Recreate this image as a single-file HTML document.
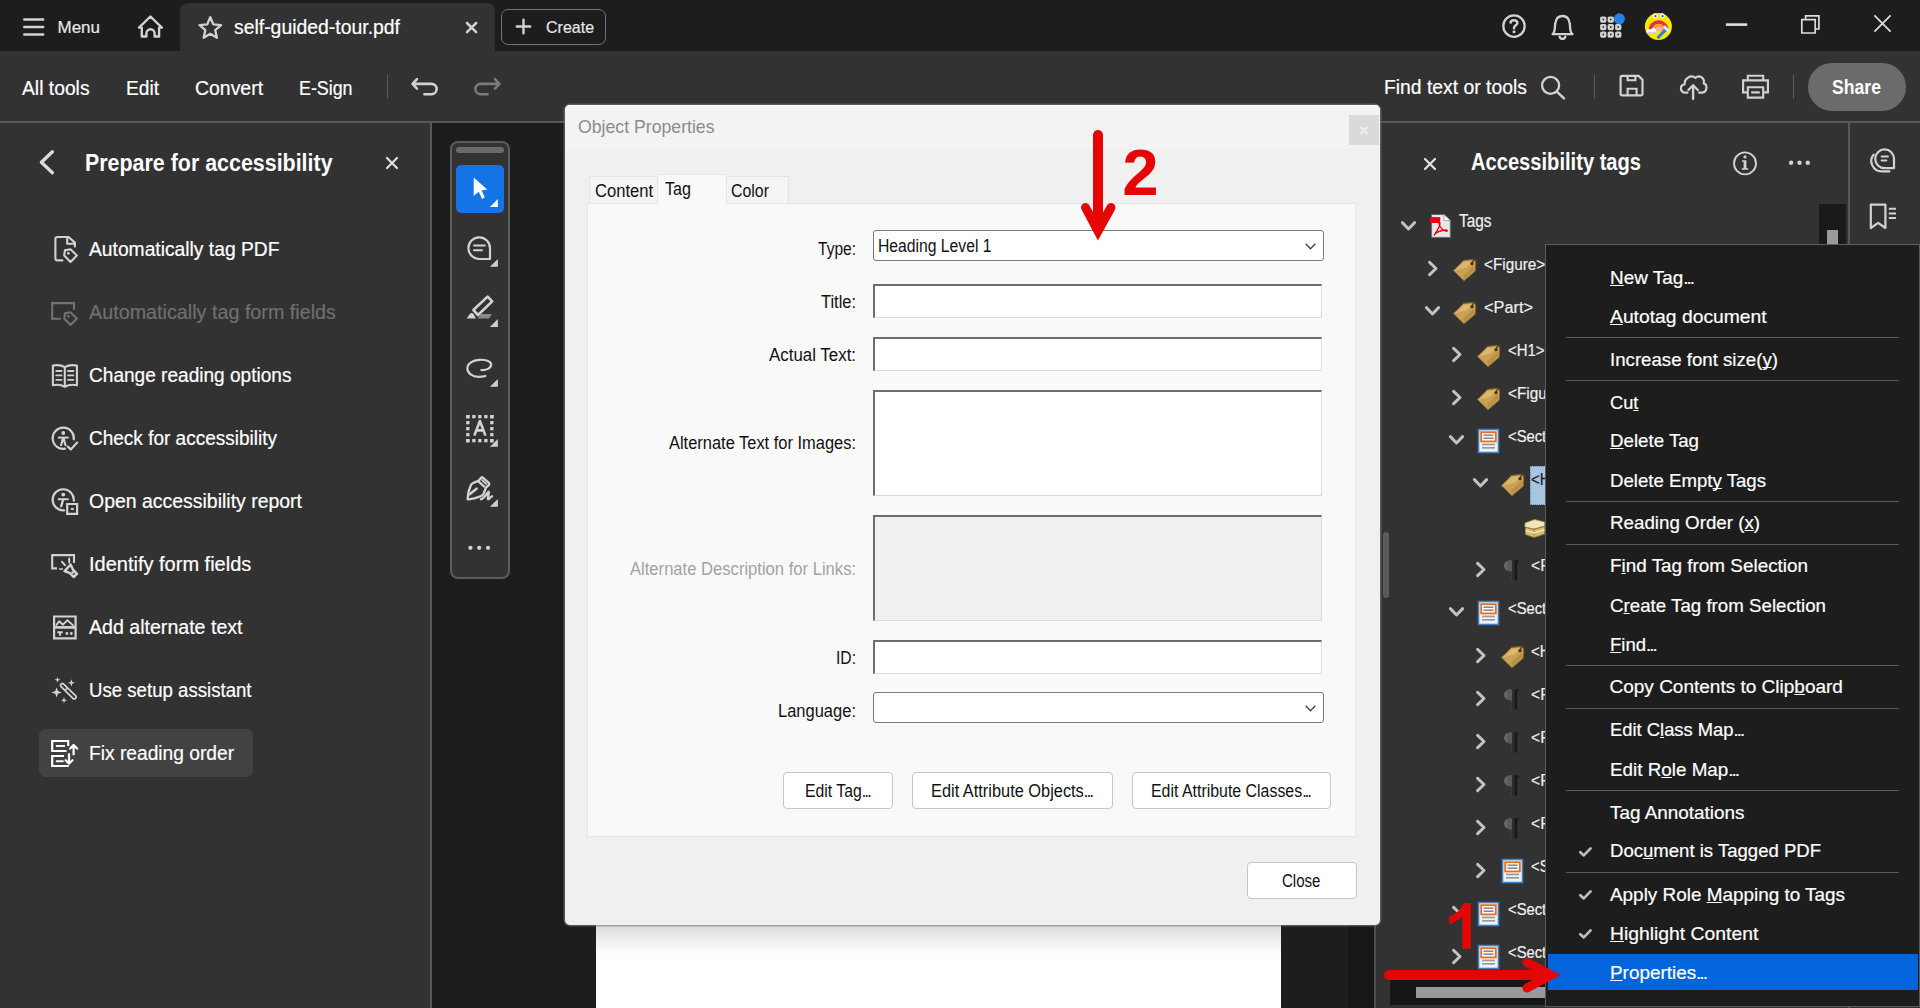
<!DOCTYPE html>
<html><head><meta charset="utf-8"><title>Acrobat</title><style>
html,body{margin:0;padding:0;}
body{width:1920px;height:1008px;overflow:hidden;background:#1d1d1d;font-family:"Liberation Sans",sans-serif;position:relative;}
.b{position:absolute;box-sizing:border-box;}
.t{position:absolute;white-space:nowrap;line-height:1;transform-origin:0 50%;-webkit-text-stroke:0.2px currentColor;}
svg{overflow:visible;}
u{text-decoration:underline;text-decoration-thickness:1.4px;text-underline-offset:1px;text-decoration-skip-ink:none;}
</style></head><body>
<div class="b" style="left:180px;top:3px;width:315px;height:49px;background:#323232;border-radius:8px 8px 0 0;"></div>
<div class="b" style="left:0px;top:51px;width:1920px;height:72px;background:#323232;border-bottom:2px solid #585858;"></div>
<div class="b" style="left:0px;top:123px;width:432px;height:885px;background:#323232;border-right:2px solid #585858;"></div>
<div class="b" style="left:596px;top:900px;width:685px;height:108px;background:#fff;"></div>
<div class="b" style="left:1348px;top:123px;width:26px;height:885px;background:#171717;"></div>
<div class="b" style="left:1374px;top:123px;width:476px;height:885px;background:#323232;border-left:2px solid #4f4f4f;"></div>
<div class="b" style="left:1848px;top:123px;width:72px;height:885px;background:#323232;border-left:2px solid #585858;"></div>
<div class="b" style="left:450px;top:141px;width:60px;height:438px;background:#323232;border:2px solid #5c5c5c;border-radius:8px;"></div>
<div class="b" style="left:456px;top:147px;width:48px;height:6px;background:#6a6a6a;border-radius:3px;"></div>
<div class="b" style="left:456px;top:165px;width:48px;height:48px;background:#1473e6;border-radius:5px;"></div>
<div class="t" style="left:57.50px;top:18px;font-size:17px;line-height:19px;color:#e6e6e6;">Menu</div>
<div class="t" style="left:234.00px;top:16px;font-size:20px;line-height:22px;color:#ffffff;transform:scaleX(0.9693);">self-guided-tour.pdf</div>
<div class="b" style="left:501px;top:9px;width:105px;height:36px;border:1.5px solid #727272;border-radius:7px;"></div>
<div class="t" style="left:546.00px;top:18px;font-size:17px;line-height:19px;color:#e6e6e6;transform:scaleX(0.9412);">Create</div>
<div class="t" style="left:22.00px;top:77px;font-size:20px;line-height:22px;color:#ffffff;transform:scaleX(0.9643);">All tools</div>
<div class="t" style="left:126.00px;top:77px;font-size:20px;line-height:22px;color:#ffffff;transform:scaleX(0.9565);">Edit</div>
<div class="t" style="left:195.00px;top:77px;font-size:20px;line-height:22px;color:#ffffff;transform:scaleX(0.9714);">Convert</div>
<div class="t" style="left:299.00px;top:77px;font-size:20px;line-height:22px;color:#ffffff;transform:scaleX(0.8917);">E-Sign</div>
<div class="b" style="left:387px;top:75px;width:1px;height:24px;background:#5a5a5a;"></div>
<div class="t" style="left:1384.00px;top:76px;font-size:20px;line-height:22px;color:#ffffff;transform:scaleX(0.9670);">Find text or tools</div>
<div class="b" style="left:1594px;top:75px;width:1px;height:24px;background:#5a5a5a;"></div>
<div class="b" style="left:1793px;top:75px;width:1px;height:24px;background:#5a5a5a;"></div>
<div class="b" style="left:1808px;top:63px;width:98px;height:48px;background:#6b6b6b;border-radius:24px;"></div>
<div class="t" style="left:1832.00px;top:76px;font-size:20px;line-height:22px;color:#ffffff;font-weight:bold;-webkit-text-stroke:0;transform:scaleX(0.8809);">Share</div>
<div class="t" style="left:84.50px;top:150px;font-size:23px;line-height:26px;color:#ffffff;font-weight:bold;-webkit-text-stroke:0;transform:scaleX(0.9309);">Prepare for accessibility</div>
<div class="b" style="left:39px;top:729px;width:214px;height:48px;background:#424242;border-radius:7px;"></div>
<div class="t" style="left:89.00px;top:238px;font-size:20px;line-height:22px;color:#ffffff;transform:scaleX(0.9627);">Automatically tag PDF</div>
<div class="t" style="left:89.00px;top:301px;font-size:20px;line-height:22px;color:#6f6f6f;transform:scaleX(0.9875);">Automatically tag form fields</div>
<div class="t" style="left:89.00px;top:364px;font-size:20px;line-height:22px;color:#ffffff;transform:scaleX(0.9535);">Change reading options</div>
<div class="t" style="left:89.00px;top:427px;font-size:20px;line-height:22px;color:#ffffff;transform:scaleX(0.9501);">Check for accessibility</div>
<div class="t" style="left:89.00px;top:490px;font-size:20px;line-height:22px;color:#ffffff;transform:scaleX(0.9726);">Open accessibility report</div>
<div class="t" style="left:89.00px;top:553px;font-size:20px;line-height:22px;color:#ffffff;">Identify form fields</div>
<div class="t" style="left:89.00px;top:616px;font-size:20px;line-height:22px;color:#ffffff;transform:scaleX(0.9793);">Add alternate text</div>
<div class="t" style="left:89.00px;top:679px;font-size:20px;line-height:22px;color:#ffffff;transform:scaleX(0.9312);">Use setup assistant</div>
<div class="t" style="left:89.00px;top:742px;font-size:20px;line-height:22px;color:#ffffff;transform:scaleX(0.9595);">Fix reading order</div>
<svg class="b" style="left:0px;top:0px;" width="1920" height="1008" viewBox="0 0 1920 1008"><path d="M24.3 19.6H43.2M24.3 27.1H43.2M24.3 34.4H43.2" stroke="#d2d2d2" stroke-width="2.5" fill="none" stroke-linecap="round" stroke-linejoin="round" /><path d="M141.8 36.5V27.6H139L150.4 16.5L161.9 27.6H159.1V36.5H154.6V33.4A4.1 4.1 0 0 0 146.4 33.4V36.5Z" stroke="#d2d2d2" stroke-width="2.4" fill="none" stroke-linecap="round" stroke-linejoin="round" /><path d="M210.30 17.30L213.36 24.39L221.05 25.11L215.25 30.21L216.94 37.74L210.30 33.80L203.66 37.74L205.35 30.21L199.55 25.11L207.24 24.39Z" stroke="#d2d2d2" stroke-width="2.3" fill="none" stroke-linecap="round" stroke-linejoin="round" /><path d="M467 23L476.2 32.2M476.2 23L467 32.2" stroke="#d2d2d2" stroke-width="2.5" fill="none" stroke-linecap="round" stroke-linejoin="round" /><path d="M516.8 26.5H530.2M523.5 19.8V33.2" stroke="#d2d2d2" stroke-width="2.4" fill="none" stroke-linecap="round" stroke-linejoin="round" /><circle cx="1514" cy="26.1" r="10.7" stroke="#d2d2d2" stroke-width="2.3" fill="none"/><path d="M1510.6 22.6C1510.8 19.4 1517.6 19.4 1517.4 23C1517.2 25.4 1514 25.4 1514 28.2" stroke="#d2d2d2" stroke-width="2.5" fill="none" stroke-linecap="round" stroke-linejoin="round" /><circle cx="1514" cy="31.8" r="1.55" fill="#d2d2d2"/><path d="M1552.6 34.2C1555.6 31.5 1554.6 27 1555.3 23.3C1556 18.6 1558.8 16 1562.5 16C1566.2 16 1569 18.6 1569.7 23.3C1570.4 27 1569.4 31.5 1572.4 34.2Z" stroke="#d2d2d2" stroke-width="2.3" fill="none" stroke-linecap="round" stroke-linejoin="round" /><path d="M1559.6 36.6A3 3 0 0 0 1565.4 36.6" stroke="#d2d2d2" stroke-width="2.3" fill="none" stroke-linecap="round" stroke-linejoin="round" /><rect x="1601.3" y="17.6" width="3.9" height="3.9" rx="0.5" stroke="#d2d2d2" stroke-width="2.4" fill="none"/><rect x="1608.8" y="17.6" width="3.9" height="3.9" rx="0.5" stroke="#d2d2d2" stroke-width="2.4" fill="none"/><rect x="1601.3" y="25.1" width="3.9" height="3.9" rx="0.5" stroke="#d2d2d2" stroke-width="2.4" fill="none"/><rect x="1608.8" y="25.1" width="3.9" height="3.9" rx="0.5" stroke="#d2d2d2" stroke-width="2.4" fill="none"/><rect x="1616.3" y="25.1" width="3.9" height="3.9" rx="0.5" stroke="#d2d2d2" stroke-width="2.4" fill="none"/><rect x="1601.3" y="32.6" width="3.9" height="3.9" rx="0.5" stroke="#d2d2d2" stroke-width="2.4" fill="none"/><rect x="1608.8" y="32.6" width="3.9" height="3.9" rx="0.5" stroke="#d2d2d2" stroke-width="2.4" fill="none"/><rect x="1616.3" y="32.6" width="3.9" height="3.9" rx="0.5" stroke="#d2d2d2" stroke-width="2.4" fill="none"/><circle cx="1619.4" cy="18.8" r="5.5" fill="#2680eb"/><g><circle cx="1658.4" cy="26.5" r="13.5" fill="#ffe500"/>
<path d="M1650.2 31.6C1650.2 18.8 1667 18.8 1667 31.6" stroke="#ea2a52" stroke-width="3.6" fill="none"/>
<path d="M1653.8 31.6C1653.8 23.6 1663.6 23.6 1663.6 31.6" stroke="#ff9a3e" stroke-width="2.8" fill="none"/>
<path d="M1656.4 31.6C1656.4 27.4 1661 27.4 1661 31.6" stroke="#f7a8da" stroke-width="2.2" fill="none"/>
<path d="M1646.4 32.6C1645.6 29.2 1649.6 28.2 1650.6 29.8C1652 26.8 1657 27.8 1656.4 32.6Z" fill="#fff"/>
<path d="M1646.6 32.4H1656.4" stroke="#c9d2e6" stroke-width="1.2"/>
<path d="M1658.4 37.2L1666.4 29" stroke="#2d7ff0" stroke-width="3.2" stroke-linecap="round"/>
<path d="M1664.8 27.2L1668.2 30.6" stroke="#d6ebff" stroke-width="3" stroke-linecap="round"/>
<circle cx="1655" cy="15.8" r="2.5" fill="#fff"/><circle cx="1662.2" cy="15.8" r="2.5" fill="#fff"/>
<circle cx="1655.4" cy="16.2" r="1.1" fill="#2b4fd0"/><circle cx="1662.6" cy="16.2" r="1.1" fill="#2b4fd0"/></g><path d="M1725.8 24.6H1747.2" stroke="#e0e0e0" stroke-width="2.6" fill="none" stroke-linecap="butt" stroke-linejoin="miter" /><path d="M1801.8 19.7H1815.2V33H1801.8Z M1805.6 19.7V15.9H1818.9V29H1815.2" stroke="#dcdcdc" stroke-width="1.7" fill="none" stroke-linecap="butt" stroke-linejoin="miter" /><path d="M1874.4 15.4L1890.6 31.6M1890.6 15.4L1874.4 31.6" stroke="#e0e0e0" stroke-width="1.7" fill="none" stroke-linecap="butt" stroke-linejoin="miter" /><path d="M417 79.2L412.5 83.9L417 88.6M412.8 83.9H431.5A5.1 5.1 0 0 1 431.5 94.2H424.4" stroke="#d2d2d2" stroke-width="2.6" fill="none" stroke-linecap="round" stroke-linejoin="round" /><path d="M495 79.2L499.5 83.9L495 88.6M499.2 83.9H480.5A5.1 5.1 0 0 0 480.5 94.2H487.6" stroke="#7b7b7b" stroke-width="2.6" fill="none" stroke-linecap="round" stroke-linejoin="round" /><circle cx="1550.6" cy="85.4" r="8.5" stroke="#d2d2d2" stroke-width="2.3" fill="none"/><path d="M1557 91.8L1564 98.4" stroke="#d2d2d2" stroke-width="2.4" fill="none" stroke-linecap="round" stroke-linejoin="round" /><path d="M1622.2 75.9H1638.6L1642.5 79.8V93.8A1.6 1.6 0 0 1 1640.9 95.4H1622.2A1.6 1.6 0 0 1 1620.6 93.8V77.5A1.6 1.6 0 0 1 1622.2 75.9Z" stroke="#d2d2d2" stroke-width="2.2" fill="none" stroke-linecap="round" stroke-linejoin="round" /><path d="M1627.6 76V80.2H1635.4V76M1627.6 95.2V88.8H1636.6V95.2" stroke="#d2d2d2" stroke-width="2.1" fill="none" stroke-linecap="butt" stroke-linejoin="miter" /><path d="M1687.4 92.6H1685.6C1679.8 92.6 1679.4 85.2 1684.6 84.4C1684.2 78.6 1690.6 74.2 1695.4 77.8C1699.8 74.2 1705.2 78.4 1703.6 83.4C1708 84.6 1707.2 92.6 1701.6 92.6H1699" stroke="#d2d2d2" stroke-width="2.2" fill="none" stroke-linecap="round" stroke-linejoin="round" /><path d="M1693.1 99V86M1688.4 90L1693.1 85.2L1697.8 90" stroke="#d2d2d2" stroke-width="2.3" fill="none" stroke-linecap="round" stroke-linejoin="round" /><path d="M1747.8 80V75.8H1763.2V80" stroke="#d2d2d2" stroke-width="2.1" fill="none" stroke-linecap="butt" stroke-linejoin="miter" /><path d="M1747.8 92.4H1743.1V80.4H1767.9V92.4H1763.2" stroke="#d2d2d2" stroke-width="2.2" fill="none" stroke-linecap="butt" stroke-linejoin="miter" /><path d="M1747.8 87.3H1763.2V97.6H1747.8Z" stroke="#d2d2d2" stroke-width="2.1" fill="none" stroke-linecap="butt" stroke-linejoin="miter" /><path d="M1751.2 92.4H1759.8" stroke="#d2d2d2" stroke-width="2.2" fill="none" stroke-linecap="butt" stroke-linejoin="miter" /><path d="M52.4 151.8L41.4 162.3L52.4 172.8" stroke="#dcdcdc" stroke-width="3.3" fill="none" stroke-linecap="round" stroke-linejoin="round" /><path d="M387 158L397 168M397 158L387 168" stroke="#e0e0e0" stroke-width="2.2" fill="none" stroke-linecap="round" stroke-linejoin="round" /><path d="M62.4 260.4H57.4A2 2 0 0 1 55.4 258.4V239A2 2 0 0 1 57.4 237H68.6L74.9 242.6V246.4M67.2 237.4V243.8H74.6" stroke="#d2d2d2" stroke-width="2.1" fill="none" stroke-linecap="round" stroke-linejoin="round" /><path d="M64.9 250.4L70.4 249.2L76.9 255.4L70.5 262L64.2 255.6Z" stroke="#d2d2d2" stroke-width="2.1" fill="none" stroke-linecap="round" stroke-linejoin="round" /><circle cx="68.4" cy="253.3" r="1.35" fill="#d2d2d2"/><path d="M60.9 318.7H52.2V303.1H74V309.7" stroke="#727272" stroke-width="2.1" fill="none" stroke-linecap="butt" stroke-linejoin="miter" /><path d="M64.9 313.4L70.4 312.2L76.9 318.4L70.5 325L64.2 318.6Z" stroke="#727272" stroke-width="2.1" fill="none" stroke-linecap="round" stroke-linejoin="round" /><circle cx="68.4" cy="316.3" r="1.35" fill="#727272"/><path d="M64.8 367.2C61 364.8 56.4 364.8 52.9 365.6V385.2C56.4 384.4 61 384.4 64.8 386.8C68.6 384.4 73.2 384.4 76.9 385.2V365.6C73.2 364.8 68.6 364.8 64.8 367.2ZM64.8 367.4V386.4" stroke="#d2d2d2" stroke-width="2.1" fill="none" stroke-linecap="round" stroke-linejoin="round" /><path d="M56.2 371H61.6M56.2 375.4H61.6M56.2 379.8H61.6M68 371H73.4M68 375.4H73.4M68 379.8H73.4" stroke="#d2d2d2" stroke-width="1.8" fill="none" stroke-linecap="round" stroke-linejoin="round" /><path d="M65 448.7A10.6 10.6 0 1 1 73.8 439.4" stroke="#d2d2d2" stroke-width="2.2" fill="none" stroke-linecap="round" stroke-linejoin="round" /><circle cx="63.3" cy="433" r="1.9" fill="#d2d2d2"/><path d="M57.9 437.6H68.7" stroke="#d2d2d2" stroke-width="2" fill="none" stroke-linecap="butt" stroke-linejoin="miter" /><path d="M62.0 437.6H64.6L66.7 446.0H64.7L63.3 441.6L61.9 446.0H59.9Z" fill="#d2d2d2" /><path d="M67.8 446.6L70.8 449.4L77.2 442.6" stroke="#d2d2d2" stroke-width="2.2" fill="none" stroke-linecap="round" stroke-linejoin="round" /><path d="M64 510.4A10.6 10.6 0 1 1 73.8 500.6" stroke="#d2d2d2" stroke-width="2.2" fill="none" stroke-linecap="round" stroke-linejoin="round" /><circle cx="63.3" cy="494.6" r="1.9" fill="#d2d2d2"/><path d="M57.9 499.20000000000005H68.7" stroke="#d2d2d2" stroke-width="2" fill="none" stroke-linecap="butt" stroke-linejoin="miter" /><path d="M63.3 499.20000000000005L60.9 507.20000000000005" stroke="#d2d2d2" stroke-width="2.3" fill="none" stroke-linecap="butt" stroke-linejoin="miter" /><path d="M67.2 504H77.1V513.9H67.2Z" stroke="#d2d2d2" stroke-width="2.2" fill="none" stroke-linecap="butt" stroke-linejoin="miter" /><path d="M70.9 509H73.8" stroke="#d2d2d2" stroke-width="2" fill="none" stroke-linecap="butt" stroke-linejoin="miter" /><path d="M57 568.4H52.2V555.1H74V563" stroke="#d2d2d2" stroke-width="2.1" fill="none" stroke-linecap="butt" stroke-linejoin="miter" /><path d="M59.2 569H62.8" stroke="#d2d2d2" stroke-width="1.6" fill="none" stroke-linecap="butt" stroke-linejoin="miter" /><path d="M62 561.8L65 565.2M69.2 558.6V562.4" stroke="#d2d2d2" stroke-width="2" fill="none" stroke-linecap="round" stroke-linejoin="round" /><path d="M70.6 564.6L64.6 571L70 573.2L73.6 577L77 573.8L73.2 570Z" stroke="#d2d2d2" stroke-width="2.5" fill="none" stroke-linecap="round" stroke-linejoin="round" /><path d="M71.6 571.6L73.6 573.6" stroke="#d2d2d2" stroke-width="1.6" fill="none" stroke-linecap="butt" stroke-linejoin="miter" /><path d="M54.1 616.5H75.6V638.4H54.1Z" stroke="#d2d2d2" stroke-width="2.2" fill="none" stroke-linecap="butt" stroke-linejoin="miter" /><path d="M54.1 627.4H75.6" stroke="#d2d2d2" stroke-width="2.7" fill="none" stroke-linecap="butt" stroke-linejoin="miter" /><path d="M56.4 625L59.3 621.2L63 624.7L67.5 620.2L73 625.4" stroke="#d2d2d2" stroke-width="1.9" fill="none" stroke-linecap="round" stroke-linejoin="round" /><path d="M57.3 632.2H62.8M60 632.2V635.8" stroke="#d2d2d2" stroke-width="1.9" fill="none" stroke-linecap="butt" stroke-linejoin="miter" /><circle cx="66.9" cy="633.5" r="1.4" fill="#d2d2d2"/><circle cx="71.3" cy="633.5" r="1.4" fill="#d2d2d2"/><path d="M62.4 685.4L74.2 697" stroke="#d2d2d2" stroke-width="5.4" fill="none" stroke-linecap="round" stroke-linejoin="round" /><path d="M62.4 685.4L74.2 697" stroke="#323232" stroke-width="1.9" fill="none" stroke-linecap="round" stroke-linejoin="round" /><path d="M65.2 690.2L67.6 687.8" stroke="#d2d2d2" stroke-width="1.5" fill="none" stroke-linecap="butt" stroke-linejoin="miter" /><path d="M56.60 687.20L57.92 691.08L61.80 692.40L57.92 693.72L56.60 697.60L55.28 693.72L51.40 692.40L55.28 691.08Z" fill="#d2d2d2" /><path d="M57.50 676.70L58.26 678.94L60.50 679.70L58.26 680.46L57.50 682.70L56.74 680.46L54.50 679.70L56.74 678.94Z" fill="#d2d2d2" /><path d="M71.40 679.20L72.32 681.88L75.00 682.80L72.32 683.72L71.40 686.40L70.48 683.72L67.80 682.80L70.48 681.88Z" fill="#d2d2d2" /><path d="M64.00 697.10L64.81 699.49L67.20 700.30L64.81 701.11L64.00 703.50L63.19 701.11L60.80 700.30L63.19 699.49Z" fill="#d2d2d2" /><path d="M66.5 751H52.2V741H68.2V746" stroke="#ffffff" stroke-width="2.2" fill="none" stroke-linecap="butt" stroke-linejoin="miter" /><path d="M55.9 746H65" stroke="#ffffff" stroke-width="1.9" fill="none" stroke-linecap="butt" stroke-linejoin="miter" /><path d="M64 756H52.2V766H68.8" stroke="#ffffff" stroke-width="2.2" fill="none" stroke-linecap="butt" stroke-linejoin="miter" /><path d="M55.9 761.2H63.6" stroke="#ffffff" stroke-width="1.9" fill="none" stroke-linecap="butt" stroke-linejoin="miter" /><path d="M73.6 754.4V745.4M70.2 748.6L73.6 745L77.1 748.6" stroke="#ffffff" stroke-width="2.2" fill="none" stroke-linecap="round" stroke-linejoin="round" /><path d="M69 754V763.2M65.6 760.2L69 763.6L72.5 760.2" stroke="#ffffff" stroke-width="2.2" fill="none" stroke-linecap="round" stroke-linejoin="round" /><path d="M473.7 177.4V195.9L478.7 191.7L482 198.9L484.9 197.6L481.6 190.5L487.2 189.6Z" fill="#ffffff" /><path d="M497.9 199.1V206.9H489.9Z" fill="#ffffff" /><path d="M497.9 258.9V266.7H489.9Z" fill="#cfcfcf" /><path d="M497.9 319.1V326.90000000000003H489.9Z" fill="#cfcfcf" /><path d="M497.9 378.9V386.7H489.9Z" fill="#cfcfcf" /><path d="M497.9 439V446.8H489.9Z" fill="#cfcfcf" /><path d="M497.9 498.9V506.7H489.9Z" fill="#cfcfcf" /><path d="M479.2 237.4A10.8 10.8 0 1 0 479.2 259H490V248.2A10.8 10.8 0 0 0 479.2 237.4Z" stroke="#d2d2d2" stroke-width="2.2" fill="none" stroke-linecap="round" stroke-linejoin="round" /><path d="M474 245.6H484.8M474 250.2H482" stroke="#d2d2d2" stroke-width="2" fill="none" stroke-linecap="round" stroke-linejoin="round" /><path d="M473.4 310L487.6 296.6L492.2 301.4L478 315Z" stroke="#d2d2d2" stroke-width="2.6" fill="none" stroke-linecap="round" stroke-linejoin="round" /><path d="M466.6 318.6L470.2 313.6Q471.7 312.4 473.2 313.6L476 318.6Z" fill="#d2d2d2" /><path d="M480.4 314H492L489 318.4H477.6Z" fill="#8a8a8a" /><path d="M481.4 370C486 370.4 491.2 368.4 491.2 364.6C491.2 361 485 359.4 479.4 359.8C472.6 360.2 467.4 363.6 467.4 368.4C467.4 373.2 472.4 376.8 478.4 376.8C481 376.8 483.4 376.6 485.4 376" stroke="#d2d2d2" stroke-width="2.2" fill="none" stroke-linecap="round" stroke-linejoin="round" /><rect x="466.2" y="415.0" width="3.3" height="3.3" fill="#d2d2d2"/><rect x="466.2" y="439.0" width="3.3" height="3.3" fill="#d2d2d2"/><rect x="466.2" y="415.0" width="3.3" height="3.3" fill="#d2d2d2"/><rect x="490.2" y="415.0" width="3.3" height="3.3" fill="#d2d2d2"/><rect x="472.2" y="415.0" width="3.3" height="3.3" fill="#d2d2d2"/><rect x="472.2" y="439.0" width="3.3" height="3.3" fill="#d2d2d2"/><rect x="466.2" y="421.0" width="3.3" height="3.3" fill="#d2d2d2"/><rect x="490.2" y="421.0" width="3.3" height="3.3" fill="#d2d2d2"/><rect x="478.2" y="415.0" width="3.3" height="3.3" fill="#d2d2d2"/><rect x="478.2" y="439.0" width="3.3" height="3.3" fill="#d2d2d2"/><rect x="466.2" y="427.0" width="3.3" height="3.3" fill="#d2d2d2"/><rect x="490.2" y="427.0" width="3.3" height="3.3" fill="#d2d2d2"/><rect x="484.2" y="415.0" width="3.3" height="3.3" fill="#d2d2d2"/><rect x="484.2" y="439.0" width="3.3" height="3.3" fill="#d2d2d2"/><rect x="466.2" y="433.0" width="3.3" height="3.3" fill="#d2d2d2"/><rect x="490.2" y="433.0" width="3.3" height="3.3" fill="#d2d2d2"/><rect x="490.2" y="415.0" width="3.3" height="3.3" fill="#d2d2d2"/><rect x="490.2" y="439.0" width="3.3" height="3.3" fill="#d2d2d2"/><rect x="466.2" y="439.0" width="3.3" height="3.3" fill="#d2d2d2"/><rect x="490.2" y="439.0" width="3.3" height="3.3" fill="#d2d2d2"/><path d="M474.7 434.6L479.9 421L485.1 434.6M476.6 430.4H483.2" stroke="#d2d2d2" stroke-width="2.6" fill="none" stroke-linecap="round" stroke-linejoin="round" /><path d="M467.6 498.4C468 493.6 469.2 488.6 470.8 485.2C471.6 483.6 472.6 483 474 482.6L478.4 480.8L481.4 477.6Q482 477 482.8 477.6L489 483.2Q489.6 484 489 484.8L486 487.6L483.6 493.6C483 495 482 495.8 480.4 496.4C476.6 497.8 472 499 468.6 499.4Q467.4 499.4 467.6 498.4Z" stroke="#d2d2d2" stroke-width="2.4" fill="none" stroke-linecap="round" stroke-linejoin="round" /><path d="M469.6 494.2L476.6 488.7" stroke="#d2d2d2" stroke-width="2.6" fill="none" stroke-linecap="round" stroke-linejoin="round" /><path d="M478.8 481.6L484.2 486.6" stroke="#d2d2d2" stroke-width="2.2" fill="none" stroke-linecap="round" stroke-linejoin="round" /><path d="M482 480.2L486.2 484" stroke="#d2d2d2" stroke-width="1.7" fill="none" stroke-linecap="round" stroke-linejoin="round" /><path d="M481 499.2C484.4 499 487.6 491.4 488.6 491.6C489.6 491.8 487 498.8 488 499.2C489 499.6 490.4 497 492 496.2" stroke="#d2d2d2" stroke-width="2.4" fill="none" stroke-linecap="round" stroke-linejoin="round" /><circle cx="470.4" cy="547.8" r="2.1" fill="#d2d2d2"/><circle cx="479.2" cy="547.8" r="2.1" fill="#d2d2d2"/><circle cx="488" cy="547.8" r="2.1" fill="#d2d2d2"/><path d="M1425 159L1435 169M1435 159L1425 169" stroke="#e0e0e0" stroke-width="2.3" fill="none" stroke-linecap="round" stroke-linejoin="round" /><circle cx="1745" cy="163.4" r="11" stroke="#d2d2d2" stroke-width="1.9" fill="none"/><circle cx="1745" cy="156.9" r="1.6" fill="#d2d2d2"/><path d="M1742 160.2H1746.4V168.2H1748.2V169.8H1741.8V168.2H1743.6V161.8H1742Z" fill="#d2d2d2" /><circle cx="1791.1" cy="162.7" r="2.2" fill="#d2d2d2"/><circle cx="1799.5" cy="162.7" r="2.2" fill="#d2d2d2"/><circle cx="1807.8" cy="162.7" r="2.2" fill="#d2d2d2"/><path d="M1884.6 149.4A9.4 9.4 0 1 0 1884.6 168.2H1894V158.8A9.4 9.4 0 0 0 1884.6 149.4Z" stroke="#d2d2d2" stroke-width="2.2" fill="none" stroke-linecap="round" stroke-linejoin="round" /><path d="M1881.6 156.5H1888M1881.6 160.5H1886.4" stroke="#d2d2d2" stroke-width="1.9" fill="none" stroke-linecap="round" stroke-linejoin="round" /><path d="M1873.6 154.6C1868.4 160.8 1872.6 171.6 1882 171.4H1889.4" stroke="#d2d2d2" stroke-width="2.2" fill="none" stroke-linecap="round" stroke-linejoin="round" /><path d="M1870.8 204.6H1885.4V228L1878.1 222.8L1870.8 228Z" stroke="#d2d2d2" stroke-width="2.2" fill="none" stroke-linecap="round" stroke-linejoin="round" /><path d="M1888.8 208.8H1896M1888.8 213.4H1896M1888.8 218H1896" stroke="#d2d2d2" stroke-width="2" fill="none" stroke-linecap="butt" stroke-linejoin="miter" /></svg>
<div class="b" style="left:596px;top:925px;width:685px;height:30px;background:linear-gradient(#dadada,#ececec 40%,#fff);"></div>
<div class="b" style="left:565px;top:105px;width:815px;height:820px;background:#f0f0f0;border-radius:5px;box-shadow:0 0 0 1.5px rgba(120,120,120,.6);"></div>
<div class="b" style="left:565px;top:105px;width:815px;height:44px;background:#f3f3f3;border-radius:5px 5px 0 0;border-top:1px solid #fdfdfd;"></div>
<div class="t" style="left:577.50px;top:116px;font-size:19px;line-height:21px;color:#8c8c8c;transform:scaleX(0.9302);-webkit-text-stroke:0;">Object Properties</div>
<div class="b" style="left:1349px;top:115px;width:30px;height:30px;background:#dadada;"></div>
<svg class="b" style="left:1359px;top:125px;" width="10" height="10" viewBox="0 0 10 10"><path d="M1.6 2.2L8.6 8.8M8.6 2.2L1.6 8.8" stroke="#eeeeee" stroke-width="2.4" fill="none"/></svg>
<div class="b" style="left:587px;top:203px;width:769px;height:634px;background:#f9f9f9;border:1px solid #e6e6e6;"></div>
<div class="b" style="left:589px;top:176px;width:69px;height:27px;background:#f4f4f4;border:1px solid #e4e4e4;border-bottom:none;"></div>
<div class="b" style="left:726px;top:176px;width:63px;height:27px;background:#f4f4f4;border:1px solid #e4e4e4;border-bottom:none;"></div>
<div class="b" style="left:657px;top:174px;width:70px;height:30px;background:#f9f9f9;border:1px solid #e6e6e6;border-bottom:none;"></div>
<div class="t" style="left:595.00px;top:181px;font-size:17.5px;line-height:20px;color:#111111;transform:scaleX(0.9469);-webkit-text-stroke:0;">Content</div>
<div class="t" style="left:665.00px;top:179px;font-size:17.5px;line-height:20px;color:#111111;transform:scaleX(0.9204);-webkit-text-stroke:0;">Tag</div>
<div class="t" style="left:731.00px;top:181px;font-size:17.5px;line-height:20px;color:#111111;transform:scaleX(0.9075);-webkit-text-stroke:0;">Color</div>
<div class="t" style="left:818.00px;top:239px;font-size:17.5px;line-height:20px;color:#111111;transform:scaleX(0.8889);-webkit-text-stroke:0;">Type:</div>
<div class="t" style="left:821.00px;top:292px;font-size:17.5px;line-height:20px;color:#111111;transform:scaleX(0.9396);-webkit-text-stroke:0;">Title:</div>
<div class="t" style="left:769.00px;top:345px;font-size:17.5px;line-height:20px;color:#111111;transform:scaleX(0.9653);-webkit-text-stroke:0;">Actual Text:</div>
<div class="t" style="left:669.00px;top:433px;font-size:17.5px;line-height:20px;color:#111111;transform:scaleX(0.9391);-webkit-text-stroke:0;">Alternate Text for Images:</div>
<div class="t" style="left:630.00px;top:559px;font-size:17.5px;line-height:20px;color:#a3a3a3;transform:scaleX(0.9486);-webkit-text-stroke:0;">Alternate Description for Links:</div>
<div class="t" style="left:836.00px;top:648px;font-size:17.5px;line-height:20px;color:#111111;transform:scaleX(0.8939);-webkit-text-stroke:0;">ID:</div>
<div class="t" style="left:778.00px;top:701px;font-size:17.5px;line-height:20px;color:#111111;transform:scaleX(0.9426);-webkit-text-stroke:0;">Language:</div>
<div class="b" style="left:873px;top:230px;width:451px;height:31px;background:#fff;border:1px solid #7a7a7a;border-radius:3px;"></div>
<div class="t" style="left:877.50px;top:236px;font-size:17.5px;line-height:20px;color:#111111;transform:scaleX(0.8972);-webkit-text-stroke:0;">Heading Level 1</div>
<svg class="b" style="left:1305px;top:243px;" width="11" height="7" viewBox="0 0 11 7"><path d="M0.7 0.7L5.5 5.8L10.3 0.7" stroke="#444" stroke-width="1.3" fill="none"/></svg>
<div class="b" style="left:873px;top:284px;width:449px;height:34px;background:#fff;border-top:2px solid #6d6d6d;border-left:2px solid #6d6d6d;border-right:1px solid #dcdcdc;border-bottom:1px solid #dcdcdc;"></div>
<div class="b" style="left:873px;top:337px;width:449px;height:34px;background:#fff;border-top:2px solid #6d6d6d;border-left:2px solid #6d6d6d;border-right:1px solid #dcdcdc;border-bottom:1px solid #dcdcdc;"></div>
<div class="b" style="left:873px;top:390px;width:449px;height:105.5px;background:#fff;border-top:2px solid #6d6d6d;border-left:2px solid #6d6d6d;border-right:1px solid #dcdcdc;border-bottom:1px solid #dcdcdc;"></div>
<div class="b" style="left:873px;top:515px;width:449px;height:106px;background:#f0f0f0;border-top:2px solid #6d6d6d;border-left:2px solid #6d6d6d;border-right:1px solid #dcdcdc;border-bottom:1px solid #dcdcdc;"></div>
<div class="b" style="left:873px;top:639.5px;width:449px;height:34px;background:#fff;border-top:2px solid #6d6d6d;border-left:2px solid #6d6d6d;border-right:1px solid #dcdcdc;border-bottom:1px solid #dcdcdc;"></div>
<div class="b" style="left:873px;top:692px;width:451px;height:31px;background:#fff;border:1px solid #7a7a7a;border-radius:3px;"></div>
<svg class="b" style="left:1305px;top:705px;" width="11" height="7" viewBox="0 0 11 7"><path d="M0.7 0.7L5.5 5.8L10.3 0.7" stroke="#444" stroke-width="1.3" fill="none"/></svg>
<div class="b" style="left:783px;top:772px;width:110px;height:37px;background:#fff;border:1px solid #c6c6c6;border-radius:4px;"></div>
<div class="b" style="left:912px;top:772px;width:201px;height:37px;background:#fff;border:1px solid #c6c6c6;border-radius:4px;"></div>
<div class="b" style="left:1132px;top:772px;width:199px;height:37px;background:#fff;border:1px solid #c6c6c6;border-radius:4px;"></div>
<div class="b" style="left:1247px;top:862px;width:110px;height:37px;background:#fff;border:1px solid #c6c6c6;border-radius:4px;"></div>
<div class="t" style="left:804.50px;top:781px;font-size:17.5px;line-height:20px;color:#111111;transform:scaleX(0.9008);-webkit-text-stroke:0;">Edit Tag<span style="letter-spacing:-0.105em">...</span></div>
<div class="t" style="left:931.00px;top:781px;font-size:17.5px;line-height:20px;color:#111111;transform:scaleX(0.9350);-webkit-text-stroke:0;">Edit Attribute Objects<span style="letter-spacing:-0.105em">...</span></div>
<div class="t" style="left:1151.00px;top:781px;font-size:17.5px;line-height:20px;color:#111111;transform:scaleX(0.9086);-webkit-text-stroke:0;">Edit Attribute Classes<span style="letter-spacing:-0.105em">...</span></div>
<div class="t" style="left:1282.00px;top:871px;font-size:17.5px;line-height:20px;color:#111111;transform:scaleX(0.8603);-webkit-text-stroke:0;">Close</div>
<div class="t" style="left:1471.00px;top:149px;font-size:23px;line-height:26px;color:#fff;font-weight:bold;-webkit-text-stroke:0;transform:scaleX(0.8752);">Accessibility tags</div>
<div class="b" style="left:1819px;top:204px;width:27px;height:60px;background:#1a1a1a;"></div>
<div class="b" style="left:1827px;top:230px;width:11px;height:30px;background:#9a9a9a;"></div>
<div class="b" style="left:1383px;top:532px;width:6px;height:66px;background:#5a5a5a;border-radius:3px;"></div>
<div class="b" style="left:1390px;top:980px;width:160px;height:25px;background:#161616;"></div>
<div class="b" style="left:1416px;top:987px;width:134px;height:11px;background:#999;"></div>
<svg class="b" style="left:1401px;top:221px;" width="15" height="10" viewBox="0 0 15 10"><path d="M1.4 1.6L7.5 8L13.6 1.6" stroke="#c2c2c2" stroke-width="3" fill="none" stroke-linecap="round" stroke-linejoin="round"/></svg>
<svg class="b" style="left:1429px;top:214px;" width="22" height="24" viewBox="0 0 22 24"><path d="M2.6 0.5H15L21.3 6.6V23.4H2.6Z" fill="#e8e8e8" stroke="#6a6a6a" stroke-width="1"/>
<path d="M15 0.5V6.6H21.3Z" fill="#fdfdfd" stroke="#8a8a8a" stroke-width=".7"/>
<rect x="1" y="3.1" width="10.2" height="5.9" fill="#e9000f"/>
<path d="M5.6 20.6C7.2 18 10.8 13 11 9.6C11.1 8.1 9.8 8.3 10 9.9C10.4 12.6 13.8 16.6 17 17.2C18.8 17.5 18.7 16 17.1 16C14 16 8.8 17.8 6 19.9C5 20.8 5.2 21.4 5.6 20.6Z" fill="none" stroke="#e9000f" stroke-width="1.3"/></svg>
<div class="t" style="left:1458.80px;top:211px;font-size:17.5px;line-height:20px;color:#f0f0f0;transform:scaleX(0.8784);">Tags</div>
<svg class="b" style="left:1428px;top:261.0px;" width="10" height="15" viewBox="0 0 10 15"><path d="M1.6 1.4L8 7.5L1.6 13.6" stroke="#c2c2c2" stroke-width="3" fill="none" stroke-linecap="round" stroke-linejoin="round"/></svg>
<svg class="b" style="left:1452.5px;top:257.5px;" width="24" height="23" viewBox="0 0 24 23"><path d="M0.4 12.6L10.6 2.4L20.2 1.6Q22.2 1.6 22.8 4L22.2 13.2L11 22.8Z" fill="#c9a055" stroke="#8c6a2a" stroke-width="1"/>
<path d="M2.2 12.4L11 3.8L19.6 3.2L13.6 9.6Z" fill="#e2c07a" opacity=".7"/>
<path d="M11 21.4L21 12.6L21.4 7L10 17.6Z" fill="#a57d35" opacity=".45"/>
<circle cx="19" cy="5.6" r="1.6" fill="#3a2a10"/><path d="M19 5.4Q20.4 0.6 23.2 1.6Q24.2 3.4 22.6 4.6" stroke="#4d3a14" stroke-width="1.3" fill="none"/></svg>
<div class="t" style="left:1484.00px;top:255px;font-size:17px;line-height:19px;color:#f0f0f0;transform:scaleX(0.9);">&lt;Figure&gt;</div>
<svg class="b" style="left:1425px;top:306.2px;" width="15" height="10" viewBox="0 0 15 10"><path d="M1.4 1.6L7.5 8L13.6 1.6" stroke="#c2c2c2" stroke-width="3" fill="none" stroke-linecap="round" stroke-linejoin="round"/></svg>
<svg class="b" style="left:1452.5px;top:300.5px;" width="24" height="23" viewBox="0 0 24 23"><path d="M0.4 12.6L10.6 2.4L20.2 1.6Q22.2 1.6 22.8 4L22.2 13.2L11 22.8Z" fill="#c9a055" stroke="#8c6a2a" stroke-width="1"/>
<path d="M2.2 12.4L11 3.8L19.6 3.2L13.6 9.6Z" fill="#e2c07a" opacity=".7"/>
<path d="M11 21.4L21 12.6L21.4 7L10 17.6Z" fill="#a57d35" opacity=".45"/>
<circle cx="19" cy="5.6" r="1.6" fill="#3a2a10"/><path d="M19 5.4Q20.4 0.6 23.2 1.6Q24.2 3.4 22.6 4.6" stroke="#4d3a14" stroke-width="1.3" fill="none"/></svg>
<div class="t" style="left:1484.00px;top:298px;font-size:17px;line-height:19px;color:#f0f0f0;transform:scaleX(0.96);">&lt;Part&gt;</div>
<svg class="b" style="left:1452px;top:347.0px;" width="10" height="15" viewBox="0 0 10 15"><path d="M1.6 1.4L8 7.5L1.6 13.6" stroke="#c2c2c2" stroke-width="3" fill="none" stroke-linecap="round" stroke-linejoin="round"/></svg>
<svg class="b" style="left:1476.5px;top:343.5px;" width="24" height="23" viewBox="0 0 24 23"><path d="M0.4 12.6L10.6 2.4L20.2 1.6Q22.2 1.6 22.8 4L22.2 13.2L11 22.8Z" fill="#c9a055" stroke="#8c6a2a" stroke-width="1"/>
<path d="M2.2 12.4L11 3.8L19.6 3.2L13.6 9.6Z" fill="#e2c07a" opacity=".7"/>
<path d="M11 21.4L21 12.6L21.4 7L10 17.6Z" fill="#a57d35" opacity=".45"/>
<circle cx="19" cy="5.6" r="1.6" fill="#3a2a10"/><path d="M19 5.4Q20.4 0.6 23.2 1.6Q24.2 3.4 22.6 4.6" stroke="#4d3a14" stroke-width="1.3" fill="none"/></svg>
<div class="t" style="left:1507.50px;top:341px;font-size:17px;line-height:19px;color:#f0f0f0;transform:scaleX(0.88);">&lt;H1&gt;</div>
<svg class="b" style="left:1452px;top:390.0px;" width="10" height="15" viewBox="0 0 10 15"><path d="M1.6 1.4L8 7.5L1.6 13.6" stroke="#c2c2c2" stroke-width="3" fill="none" stroke-linecap="round" stroke-linejoin="round"/></svg>
<svg class="b" style="left:1476.5px;top:386.5px;" width="24" height="23" viewBox="0 0 24 23"><path d="M0.4 12.6L10.6 2.4L20.2 1.6Q22.2 1.6 22.8 4L22.2 13.2L11 22.8Z" fill="#c9a055" stroke="#8c6a2a" stroke-width="1"/>
<path d="M2.2 12.4L11 3.8L19.6 3.2L13.6 9.6Z" fill="#e2c07a" opacity=".7"/>
<path d="M11 21.4L21 12.6L21.4 7L10 17.6Z" fill="#a57d35" opacity=".45"/>
<circle cx="19" cy="5.6" r="1.6" fill="#3a2a10"/><path d="M19 5.4Q20.4 0.6 23.2 1.6Q24.2 3.4 22.6 4.6" stroke="#4d3a14" stroke-width="1.3" fill="none"/></svg>
<div class="t" style="left:1507.50px;top:384px;font-size:17px;line-height:19px;color:#f0f0f0;transform:scaleX(0.9);">&lt;Figure&gt;</div>
<svg class="b" style="left:1449px;top:435.2px;" width="15" height="10" viewBox="0 0 15 10"><path d="M1.4 1.6L7.5 8L13.6 1.6" stroke="#c2c2c2" stroke-width="3" fill="none" stroke-linecap="round" stroke-linejoin="round"/></svg>
<svg class="b" style="left:1478.0px;top:429.0px;" width="21" height="24" viewBox="0 0 21 24"><rect x="0.5" y="0.5" width="20" height="23" fill="#eef3f9" stroke="#3d7fc4" stroke-width="1.6"/>
<rect x="3.2" y="3.2" width="14.6" height="9.2" fill="#fff" stroke="#f26a1b" stroke-width="1.8"/>
<rect x="5.5" y="5.4" width="10" height="1.6" fill="#8a8a8a"/><rect x="5.5" y="8.4" width="10" height="1.6" fill="#8a8a8a"/>
<rect x="4" y="14.6" width="13" height="1.7" fill="#9a9a9a"/><rect x="4" y="18" width="13" height="1.7" fill="#9a9a9a"/></svg>
<div class="t" style="left:1507.50px;top:427px;font-size:17px;line-height:19px;color:#f0f0f0;transform:scaleX(0.87);">&lt;Sect&gt;</div>
<div class="b" style="left:1530px;top:466px;width:16px;height:38.5px;background:#a6c5e3;border:1px dotted #6d8aa8;"></div>
<svg class="b" style="left:1473px;top:478.2px;" width="15" height="10" viewBox="0 0 15 10"><path d="M1.4 1.6L7.5 8L13.6 1.6" stroke="#c2c2c2" stroke-width="3" fill="none" stroke-linecap="round" stroke-linejoin="round"/></svg>
<svg class="b" style="left:1500.5px;top:472.5px;" width="24" height="23" viewBox="0 0 24 23"><path d="M0.4 12.6L10.6 2.4L20.2 1.6Q22.2 1.6 22.8 4L22.2 13.2L11 22.8Z" fill="#c9a055" stroke="#8c6a2a" stroke-width="1"/>
<path d="M2.2 12.4L11 3.8L19.6 3.2L13.6 9.6Z" fill="#e2c07a" opacity=".7"/>
<path d="M11 21.4L21 12.6L21.4 7L10 17.6Z" fill="#a57d35" opacity=".45"/>
<circle cx="19" cy="5.6" r="1.6" fill="#3a2a10"/><path d="M19 5.4Q20.4 0.6 23.2 1.6Q24.2 3.4 22.6 4.6" stroke="#4d3a14" stroke-width="1.3" fill="none"/></svg>
<div class="t" style="left:1531.00px;top:470px;font-size:17px;line-height:19px;color:#1a1a1a;transform:scaleX(0.88);">&lt;H2&gt;</div>
<svg class="b" style="left:1524px;top:517.5px;" width="21" height="20" viewBox="0 0 21 20"><path d="M1 5L10.5 1.5L20.5 4L20.5 8L10 11L1 9Z" fill="#f1e6b8" stroke="#a8924e" stroke-width=".8"/>
<path d="M1.5 9.5L10 11.5L20.5 8.5V16L10 19.5L1.5 16.5Z" fill="#d8be6a" stroke="#9c8240" stroke-width=".8"/>
<path d="M10 11.5V19.5" stroke="#9c8240" stroke-width=".8"/><path d="M1.5 12.6L10 14.8L20.5 11.6" stroke="#f3ecc8" stroke-width="1.2" fill="none"/></svg>
<svg class="b" style="left:1476px;top:562.0px;" width="10" height="15" viewBox="0 0 10 15"><path d="M1.6 1.4L8 7.5L1.6 13.6" stroke="#c2c2c2" stroke-width="3" fill="none" stroke-linecap="round" stroke-linejoin="round"/></svg>
<svg class="b" style="left:1504.0px;top:559.5px;" width="15" height="21" viewBox="0 0 15 21"><path d="M6.8 0.3H14.6V2.6H13.2V20.6H10.4V2.6H9.4V20.6H6.6V11.4C2.6 11.4 0.2 9 0.2 5.8C0.2 2.6 2.6 0.3 6.8 0.3Z" fill="#3a3a3a"/>
<path d="M6.8 0.3H8V11.4H6.6C2.6 11.4 0.2 9 0.2 5.8C0.2 2.6 2.6 0.3 6.8 0.3Z" fill="#5a5a5a"/>
<path d="M3.4 1.2C1.4 2.2 0.2 3.8 0.2 5.8C0.2 7.8 1.4 9.6 3.4 10.6Z" fill="#686868"/>
<path d="M10.4 0.3H14.6V2.6H13.2V20.6H10.4Z" fill="#181818"/>
<path d="M8 0.3H10.4V2.6H9.4V20.6H8Z" fill="#2c2c2c"/></svg>
<div class="t" style="left:1531.00px;top:556px;font-size:17px;line-height:19px;color:#f0f0f0;transform:scaleX(0.92);">&lt;P&gt;</div>
<svg class="b" style="left:1449px;top:607.2px;" width="15" height="10" viewBox="0 0 15 10"><path d="M1.4 1.6L7.5 8L13.6 1.6" stroke="#c2c2c2" stroke-width="3" fill="none" stroke-linecap="round" stroke-linejoin="round"/></svg>
<svg class="b" style="left:1478.0px;top:601.0px;" width="21" height="24" viewBox="0 0 21 24"><rect x="0.5" y="0.5" width="20" height="23" fill="#eef3f9" stroke="#3d7fc4" stroke-width="1.6"/>
<rect x="3.2" y="3.2" width="14.6" height="9.2" fill="#fff" stroke="#f26a1b" stroke-width="1.8"/>
<rect x="5.5" y="5.4" width="10" height="1.6" fill="#8a8a8a"/><rect x="5.5" y="8.4" width="10" height="1.6" fill="#8a8a8a"/>
<rect x="4" y="14.6" width="13" height="1.7" fill="#9a9a9a"/><rect x="4" y="18" width="13" height="1.7" fill="#9a9a9a"/></svg>
<div class="t" style="left:1507.50px;top:599px;font-size:17px;line-height:19px;color:#f0f0f0;transform:scaleX(0.87);">&lt;Sect&gt;</div>
<svg class="b" style="left:1476px;top:648.0px;" width="10" height="15" viewBox="0 0 10 15"><path d="M1.6 1.4L8 7.5L1.6 13.6" stroke="#c2c2c2" stroke-width="3" fill="none" stroke-linecap="round" stroke-linejoin="round"/></svg>
<svg class="b" style="left:1500.5px;top:644.5px;" width="24" height="23" viewBox="0 0 24 23"><path d="M0.4 12.6L10.6 2.4L20.2 1.6Q22.2 1.6 22.8 4L22.2 13.2L11 22.8Z" fill="#c9a055" stroke="#8c6a2a" stroke-width="1"/>
<path d="M2.2 12.4L11 3.8L19.6 3.2L13.6 9.6Z" fill="#e2c07a" opacity=".7"/>
<path d="M11 21.4L21 12.6L21.4 7L10 17.6Z" fill="#a57d35" opacity=".45"/>
<circle cx="19" cy="5.6" r="1.6" fill="#3a2a10"/><path d="M19 5.4Q20.4 0.6 23.2 1.6Q24.2 3.4 22.6 4.6" stroke="#4d3a14" stroke-width="1.3" fill="none"/></svg>
<div class="t" style="left:1531.00px;top:642px;font-size:17px;line-height:19px;color:#f0f0f0;transform:scaleX(0.88);">&lt;H2&gt;</div>
<svg class="b" style="left:1476px;top:691.0px;" width="10" height="15" viewBox="0 0 10 15"><path d="M1.6 1.4L8 7.5L1.6 13.6" stroke="#c2c2c2" stroke-width="3" fill="none" stroke-linecap="round" stroke-linejoin="round"/></svg>
<svg class="b" style="left:1504.0px;top:688.5px;" width="15" height="21" viewBox="0 0 15 21"><path d="M6.8 0.3H14.6V2.6H13.2V20.6H10.4V2.6H9.4V20.6H6.6V11.4C2.6 11.4 0.2 9 0.2 5.8C0.2 2.6 2.6 0.3 6.8 0.3Z" fill="#3a3a3a"/>
<path d="M6.8 0.3H8V11.4H6.6C2.6 11.4 0.2 9 0.2 5.8C0.2 2.6 2.6 0.3 6.8 0.3Z" fill="#5a5a5a"/>
<path d="M3.4 1.2C1.4 2.2 0.2 3.8 0.2 5.8C0.2 7.8 1.4 9.6 3.4 10.6Z" fill="#686868"/>
<path d="M10.4 0.3H14.6V2.6H13.2V20.6H10.4Z" fill="#181818"/>
<path d="M8 0.3H10.4V2.6H9.4V20.6H8Z" fill="#2c2c2c"/></svg>
<div class="t" style="left:1531.00px;top:685px;font-size:17px;line-height:19px;color:#f0f0f0;transform:scaleX(0.92);">&lt;P&gt;</div>
<svg class="b" style="left:1476px;top:734.0px;" width="10" height="15" viewBox="0 0 10 15"><path d="M1.6 1.4L8 7.5L1.6 13.6" stroke="#c2c2c2" stroke-width="3" fill="none" stroke-linecap="round" stroke-linejoin="round"/></svg>
<svg class="b" style="left:1504.0px;top:731.5px;" width="15" height="21" viewBox="0 0 15 21"><path d="M6.8 0.3H14.6V2.6H13.2V20.6H10.4V2.6H9.4V20.6H6.6V11.4C2.6 11.4 0.2 9 0.2 5.8C0.2 2.6 2.6 0.3 6.8 0.3Z" fill="#3a3a3a"/>
<path d="M6.8 0.3H8V11.4H6.6C2.6 11.4 0.2 9 0.2 5.8C0.2 2.6 2.6 0.3 6.8 0.3Z" fill="#5a5a5a"/>
<path d="M3.4 1.2C1.4 2.2 0.2 3.8 0.2 5.8C0.2 7.8 1.4 9.6 3.4 10.6Z" fill="#686868"/>
<path d="M10.4 0.3H14.6V2.6H13.2V20.6H10.4Z" fill="#181818"/>
<path d="M8 0.3H10.4V2.6H9.4V20.6H8Z" fill="#2c2c2c"/></svg>
<div class="t" style="left:1531.00px;top:728px;font-size:17px;line-height:19px;color:#f0f0f0;transform:scaleX(0.92);">&lt;P&gt;</div>
<svg class="b" style="left:1476px;top:777.0px;" width="10" height="15" viewBox="0 0 10 15"><path d="M1.6 1.4L8 7.5L1.6 13.6" stroke="#c2c2c2" stroke-width="3" fill="none" stroke-linecap="round" stroke-linejoin="round"/></svg>
<svg class="b" style="left:1504.0px;top:774.5px;" width="15" height="21" viewBox="0 0 15 21"><path d="M6.8 0.3H14.6V2.6H13.2V20.6H10.4V2.6H9.4V20.6H6.6V11.4C2.6 11.4 0.2 9 0.2 5.8C0.2 2.6 2.6 0.3 6.8 0.3Z" fill="#3a3a3a"/>
<path d="M6.8 0.3H8V11.4H6.6C2.6 11.4 0.2 9 0.2 5.8C0.2 2.6 2.6 0.3 6.8 0.3Z" fill="#5a5a5a"/>
<path d="M3.4 1.2C1.4 2.2 0.2 3.8 0.2 5.8C0.2 7.8 1.4 9.6 3.4 10.6Z" fill="#686868"/>
<path d="M10.4 0.3H14.6V2.6H13.2V20.6H10.4Z" fill="#181818"/>
<path d="M8 0.3H10.4V2.6H9.4V20.6H8Z" fill="#2c2c2c"/></svg>
<div class="t" style="left:1531.00px;top:771px;font-size:17px;line-height:19px;color:#f0f0f0;transform:scaleX(0.92);">&lt;P&gt;</div>
<svg class="b" style="left:1476px;top:820.0px;" width="10" height="15" viewBox="0 0 10 15"><path d="M1.6 1.4L8 7.5L1.6 13.6" stroke="#c2c2c2" stroke-width="3" fill="none" stroke-linecap="round" stroke-linejoin="round"/></svg>
<svg class="b" style="left:1504.0px;top:817.5px;" width="15" height="21" viewBox="0 0 15 21"><path d="M6.8 0.3H14.6V2.6H13.2V20.6H10.4V2.6H9.4V20.6H6.6V11.4C2.6 11.4 0.2 9 0.2 5.8C0.2 2.6 2.6 0.3 6.8 0.3Z" fill="#3a3a3a"/>
<path d="M6.8 0.3H8V11.4H6.6C2.6 11.4 0.2 9 0.2 5.8C0.2 2.6 2.6 0.3 6.8 0.3Z" fill="#5a5a5a"/>
<path d="M3.4 1.2C1.4 2.2 0.2 3.8 0.2 5.8C0.2 7.8 1.4 9.6 3.4 10.6Z" fill="#686868"/>
<path d="M10.4 0.3H14.6V2.6H13.2V20.6H10.4Z" fill="#181818"/>
<path d="M8 0.3H10.4V2.6H9.4V20.6H8Z" fill="#2c2c2c"/></svg>
<div class="t" style="left:1531.00px;top:814px;font-size:17px;line-height:19px;color:#f0f0f0;transform:scaleX(0.92);">&lt;P&gt;</div>
<svg class="b" style="left:1476px;top:863.0px;" width="10" height="15" viewBox="0 0 10 15"><path d="M1.6 1.4L8 7.5L1.6 13.6" stroke="#c2c2c2" stroke-width="3" fill="none" stroke-linecap="round" stroke-linejoin="round"/></svg>
<svg class="b" style="left:1502.0px;top:859.0px;" width="21" height="24" viewBox="0 0 21 24"><rect x="0.5" y="0.5" width="20" height="23" fill="#eef3f9" stroke="#3d7fc4" stroke-width="1.6"/>
<rect x="3.2" y="3.2" width="14.6" height="9.2" fill="#fff" stroke="#f26a1b" stroke-width="1.8"/>
<rect x="5.5" y="5.4" width="10" height="1.6" fill="#8a8a8a"/><rect x="5.5" y="8.4" width="10" height="1.6" fill="#8a8a8a"/>
<rect x="4" y="14.6" width="13" height="1.7" fill="#9a9a9a"/><rect x="4" y="18" width="13" height="1.7" fill="#9a9a9a"/></svg>
<div class="t" style="left:1531.00px;top:857px;font-size:17px;line-height:19px;color:#f0f0f0;transform:scaleX(0.87);">&lt;Sect&gt;</div>
<svg class="b" style="left:1452px;top:906.0px;" width="10" height="15" viewBox="0 0 10 15"><path d="M1.6 1.4L8 7.5L1.6 13.6" stroke="#c2c2c2" stroke-width="3" fill="none" stroke-linecap="round" stroke-linejoin="round"/></svg>
<svg class="b" style="left:1478.0px;top:902.0px;" width="21" height="24" viewBox="0 0 21 24"><rect x="0.5" y="0.5" width="20" height="23" fill="#eef3f9" stroke="#3d7fc4" stroke-width="1.6"/>
<rect x="3.2" y="3.2" width="14.6" height="9.2" fill="#fff" stroke="#f26a1b" stroke-width="1.8"/>
<rect x="5.5" y="5.4" width="10" height="1.6" fill="#8a8a8a"/><rect x="5.5" y="8.4" width="10" height="1.6" fill="#8a8a8a"/>
<rect x="4" y="14.6" width="13" height="1.7" fill="#9a9a9a"/><rect x="4" y="18" width="13" height="1.7" fill="#9a9a9a"/></svg>
<div class="t" style="left:1507.50px;top:900px;font-size:17px;line-height:19px;color:#f0f0f0;transform:scaleX(0.87);">&lt;Sect&gt;</div>
<svg class="b" style="left:1452px;top:949.0px;" width="10" height="15" viewBox="0 0 10 15"><path d="M1.6 1.4L8 7.5L1.6 13.6" stroke="#c2c2c2" stroke-width="3" fill="none" stroke-linecap="round" stroke-linejoin="round"/></svg>
<svg class="b" style="left:1478.0px;top:945.0px;" width="21" height="24" viewBox="0 0 21 24"><rect x="0.5" y="0.5" width="20" height="23" fill="#eef3f9" stroke="#3d7fc4" stroke-width="1.6"/>
<rect x="3.2" y="3.2" width="14.6" height="9.2" fill="#fff" stroke="#f26a1b" stroke-width="1.8"/>
<rect x="5.5" y="5.4" width="10" height="1.6" fill="#8a8a8a"/><rect x="5.5" y="8.4" width="10" height="1.6" fill="#8a8a8a"/>
<rect x="4" y="14.6" width="13" height="1.7" fill="#9a9a9a"/><rect x="4" y="18" width="13" height="1.7" fill="#9a9a9a"/></svg>
<div class="t" style="left:1507.50px;top:943px;font-size:17px;line-height:19px;color:#f0f0f0;transform:scaleX(0.87);">&lt;Sect&gt;</div>
<div class="b" style="left:1545px;top:244px;width:375px;height:763px;background:#1d1d1d;border:1px solid #5c5c5c;"></div>
<div class="b" style="left:1548px;top:954px;width:1370px;height:36px;background:#0265dc;width:370px;"></div>
<div class="t" style="left:1609.50px;top:267px;font-size:19px;line-height:21px;color:#fff;transform:scaleX(0.9955);"><u>N</u>ew Tag<span style="letter-spacing:-0.105em">...</span></div>
<div class="t" style="left:1609.50px;top:306px;font-size:19px;line-height:21px;color:#fff;transform:scaleX(1.0159);"><u>A</u>utotag document</div>
<div class="t" style="left:1609.50px;top:349px;font-size:19px;line-height:21px;color:#fff;transform:scaleX(0.9817);">Increase font size(<u>y</u>)</div>
<div class="t" style="left:1609.50px;top:392px;font-size:19px;line-height:21px;color:#fff;transform:scaleX(0.9586);">Cu<u>t</u></div>
<div class="t" style="left:1609.50px;top:430px;font-size:19px;line-height:21px;color:#fff;transform:scaleX(0.9834);"><u>D</u>elete Tag</div>
<div class="t" style="left:1609.50px;top:470px;font-size:19px;line-height:21px;color:#fff;transform:scaleX(0.9804);">Delete Empt<u>y</u> Tags</div>
<div class="t" style="left:1609.50px;top:512px;font-size:19px;line-height:21px;color:#fff;transform:scaleX(0.9868);">Reading Order (<u>x</u>)</div>
<div class="t" style="left:1609.50px;top:555px;font-size:19px;line-height:21px;color:#fff;transform:scaleX(0.9937);">F<u>i</u>nd Tag from Selection</div>
<div class="t" style="left:1609.50px;top:595px;font-size:19px;line-height:21px;color:#fff;transform:scaleX(0.9846);">C<u>r</u>eate Tag from Selection</div>
<div class="t" style="left:1609.50px;top:634px;font-size:19px;line-height:21px;color:#fff;transform:scaleX(0.9762);"><u>F</u>ind<span style="letter-spacing:-0.105em">...</span></div>
<div class="t" style="left:1609.50px;top:676px;font-size:19px;line-height:21px;color:#fff;">Copy Contents to Clip<u>b</u>oard</div>
<div class="t" style="left:1609.50px;top:719px;font-size:19px;line-height:21px;color:#fff;transform:scaleX(0.9668);">Edit C<u>l</u>ass Map<span style="letter-spacing:-0.105em">...</span></div>
<div class="t" style="left:1609.50px;top:759px;font-size:19px;line-height:21px;color:#fff;transform:scaleX(0.9913);">Edit R<u>o</u>le Map<span style="letter-spacing:-0.105em">...</span></div>
<div class="t" style="left:1609.50px;top:802px;font-size:19px;line-height:21px;color:#fff;transform:scaleX(0.9945);">Tag Annotations</div>
<div class="t" style="left:1609.50px;top:840px;font-size:19px;line-height:21px;color:#fff;transform:scaleX(0.9763);">Doc<u>u</u>ment is Tagged PDF</div>
<div class="t" style="left:1609.50px;top:884px;font-size:19px;line-height:21px;color:#fff;transform:scaleX(0.9947);">Apply Role <u>M</u>apping to Tags</div>
<div class="t" style="left:1609.50px;top:923px;font-size:19px;line-height:21px;color:#fff;transform:scaleX(1.0175);"><u>H</u>ighlight Content</div>
<div class="t" style="left:1609.50px;top:962px;font-size:19px;line-height:21px;color:#fff;transform:scaleX(0.9941);"><u>P</u>roperties<span style="letter-spacing:-0.105em">...</span></div>
<div class="b" style="left:1566px;top:337px;width:333px;height:1px;background:#5a5a5a;"></div>
<div class="b" style="left:1566px;top:380px;width:333px;height:1px;background:#5a5a5a;"></div>
<div class="b" style="left:1566px;top:501px;width:333px;height:1px;background:#5a5a5a;"></div>
<div class="b" style="left:1566px;top:544px;width:333px;height:1px;background:#5a5a5a;"></div>
<div class="b" style="left:1566px;top:665px;width:333px;height:1px;background:#5a5a5a;"></div>
<div class="b" style="left:1566px;top:708px;width:333px;height:1px;background:#5a5a5a;"></div>
<div class="b" style="left:1566px;top:790px;width:333px;height:1px;background:#5a5a5a;"></div>
<div class="b" style="left:1566px;top:872px;width:333px;height:1px;background:#5a5a5a;"></div>
<svg class="b" style="left:1579px;top:846.9px;" width="13" height="10" viewBox="0 0 13 10"><path d="M1.3 5.2L4.8 8.4L11.6 1.4" stroke="#bdbdbd" stroke-width="2.7" fill="none" stroke-linecap="round" stroke-linejoin="round"/></svg>
<svg class="b" style="left:1579px;top:890.2px;" width="13" height="10" viewBox="0 0 13 10"><path d="M1.3 5.2L4.8 8.4L11.6 1.4" stroke="#bdbdbd" stroke-width="2.7" fill="none" stroke-linecap="round" stroke-linejoin="round"/></svg>
<svg class="b" style="left:1579px;top:929.4px;" width="13" height="10" viewBox="0 0 13 10"><path d="M1.3 5.2L4.8 8.4L11.6 1.4" stroke="#bdbdbd" stroke-width="2.7" fill="none" stroke-linecap="round" stroke-linejoin="round"/></svg>
<svg class="b" style="left:0px;top:0px;pointer-events:none;" width="1920" height="1008" viewBox="0 0 1920 1008">
<g stroke="#e60505" stroke-width="10" fill="none" stroke-linecap="round" stroke-linejoin="miter">
<path d="M1098 135V228"/>
<path d="M1085.5 207.5L1098 231L1111 207.5" stroke-width="9"/>
<path d="M1389 975H1548"/>
<path d="M1527 962.5L1551 975L1527 988" stroke-width="9"/>
</g></svg>
<div class="t" style="left:1122.50px;top:136px;font-size:64.68px;line-height:73px;font-weight:bold;color:#e60505;">2</div>
<svg class="b" style="left:0px;top:0px;" width="1920" height="1008" viewBox="0 0 1920 1008"><path d="M1470.8 903V948.8H1462.3V916.2C1459 919.6 1454.6 922.4 1449.6 924.2L1448.8 917C1455.4 914.4 1461 909.4 1463.8 903Z" fill="#e60505"/></svg>
</body></html>
